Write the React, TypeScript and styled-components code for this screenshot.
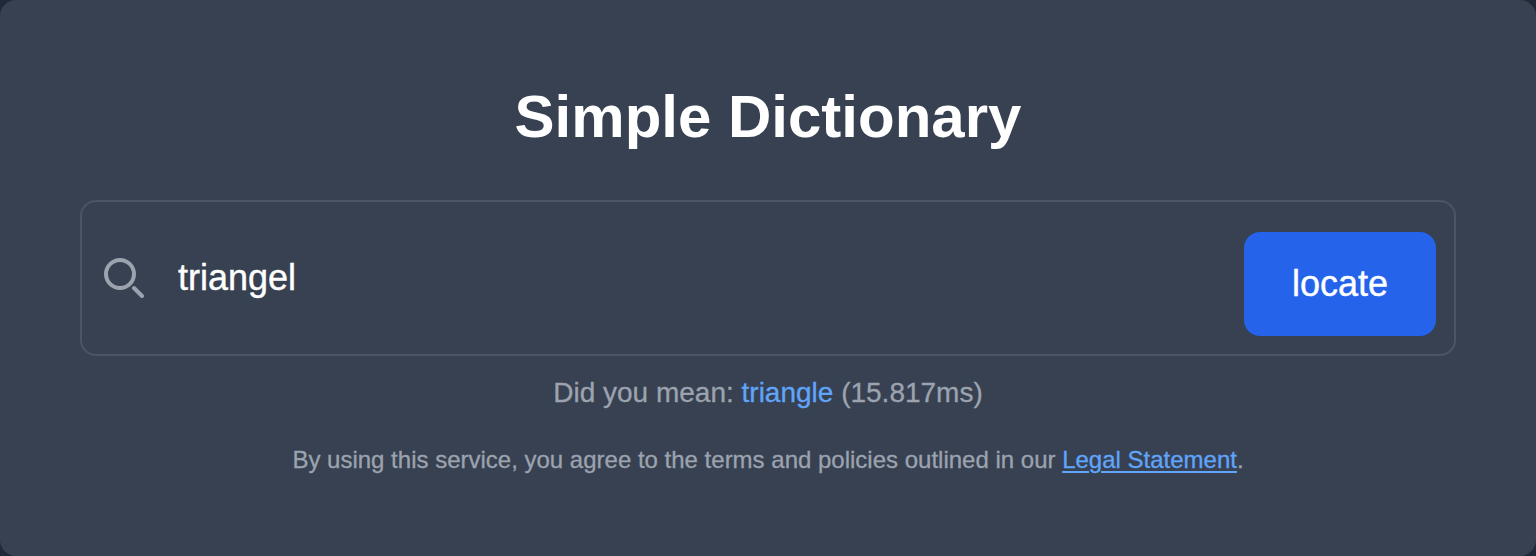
import React from "react";
import styled, { createGlobalStyle } from "styled-components";

const GlobalStyle = createGlobalStyle`
  * { box-sizing: border-box; }
  body {
    margin: 0;
    background: #1f2937;
    font-family: "Liberation Sans", Arial, sans-serif;
  }
`;

const Card = styled.main`
  height: 556px;
  padding: 81px 80px 0;
  border-radius: 16px;
  background: #374151;
  text-align: center;
`;

const Title = styled.h1`
  margin: 0 0 47px;
  font-size: 60px;
  line-height: 72px;
  font-weight: 700;
  color: #fff;
`;

const SearchForm = styled.form`
  display: flex;
  height: 156px;
  padding: 0 18px 0 22px;
  align-items: center;
  border: 2px solid #4b5563;
  border-radius: 16px;
`;

const SearchIcon = styled.svg`
  flex: none;
  width: 40px;
  height: 40px;
  color: #9ca3af;
`;

const SearchInput = styled.input`
  flex: 1;
  min-width: 0;
  height: 60px;
  margin-left: 34px;
  padding: 0;
  border: 0;
  outline: 0;
  background: transparent;
  color: #fff;
  font: 36px "Liberation Sans", Arial, sans-serif;
  -webkit-text-stroke: 0.4px currentColor;
`;

const LocateButton = styled.button`
  width: 192px;
  height: 104px;
  margin-top: 12px;
  padding: 0;
  border: 0;
  border-radius: 16px;
  background: #2563eb;
  color: #fff;
  font: 36px "Liberation Sans", Arial, sans-serif;
  -webkit-text-stroke: 0.4px currentColor;
`;

const Suggestion = styled.p`
  margin: 17px 0 0;
  font-size: 28px;
  line-height: 40px;
  color: #9ca3af;
  -webkit-text-stroke: 0.3px currentColor;
`;

const SuggestedWord = styled.a`
  color: #60a5fa;
`;

const Terms = styled.p`
  margin: 31px 0 0;
  font-size: 24px;
  line-height: 32px;
  color: #9ca3af;
  -webkit-text-stroke: 0.3px currentColor;
`;

const LegalLink = styled.a`
  color: #60a5fa;
  text-decoration: underline;
  text-decoration-thickness: 2px;
  text-underline-offset: 3px;
`;

export default function App() {
  return (
    <>
      <GlobalStyle />
      <Card>
        <Title>Simple Dictionary</Title>
        <SearchForm onSubmit={(e) => e.preventDefault()}>
          <SearchIcon viewBox="0 0 40 40" fill="none" stroke="currentColor" strokeWidth="4" strokeLinecap="round">
            <circle cx="16" cy="16" r="14" />
            <path d="M30 30l8 8" />
          </SearchIcon>
          <SearchInput defaultValue="triangel" spellCheck={false} />
          <LocateButton type="submit">locate</LocateButton>
        </SearchForm>
        <Suggestion>
          Did you mean: <SuggestedWord>triangle</SuggestedWord> (15.817ms)
        </Suggestion>
        <Terms>
          By using this service, you agree to the terms and policies outlined in our <LegalLink>Legal Statement</LegalLink>.
        </Terms>
      </Card>
    </>
  );
}
